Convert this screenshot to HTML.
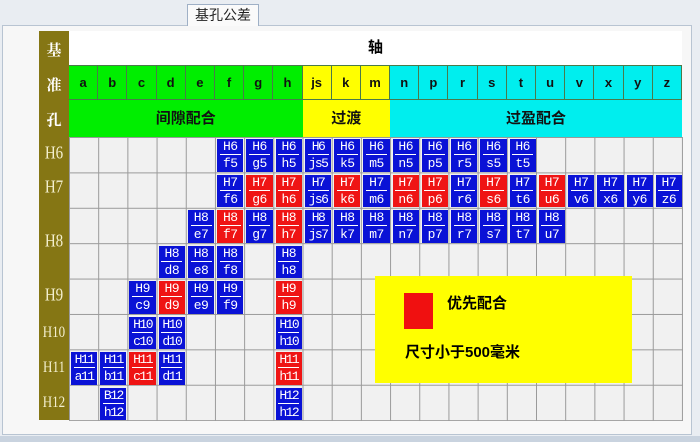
<!DOCTYPE html>
<html><head><meta charset="utf-8"><style>
*{margin:0;padding:0;box-sizing:border-box}
body{width:700px;height:442px;overflow:hidden;background:#e9edf2;position:relative;font-family:"Liberation Sans","Noto Sans CJK SC",sans-serif}
.abs{position:absolute}
#panel{left:2px;top:25px;width:690px;height:410px;background:#f7f7f7;border:1px solid #b8c4d2}
#tab{left:187px;top:4px;width:72px;height:22px;background:#fafafa;border:1px solid #9fb0c6;border-bottom:none;font-size:14px;text-align:center;line-height:21px;color:#222}
#olive{left:39px;top:31px;width:30px;height:389px;background:#857614}
.ol{position:absolute;left:0;width:30px;text-align:center;color:#fff}
.cj{font-weight:bold;font-size:15px;font-family:"Liberation Serif","Noto Serif CJK SC",serif}
.hl{font-family:"Liberation Serif",serif;font-size:15px;color:#f4f0d0;transform:scaleY(1.2)}
#white{left:69px;top:31px;width:613px;height:34px;background:#fff;text-align:center;font-weight:bold;font-size:15px;line-height:34px}
.hdr{left:69px;top:65px;width:613px;height:72px;display:grid;grid-template-columns:repeat(21,1fr);grid-template-rows:35px 37px}
.lt{border:1px solid #4a7a4a;border-left-width:0;text-align:center;font-weight:bold;font-size:13px;line-height:33px;color:#111}
.cls{text-align:center;font-weight:bold;font-size:15px;line-height:37px;color:#111}
#grid{left:69px;top:137px;width:614px;height:284px;display:grid;grid-template-columns:repeat(21,1fr);grid-template-rows:repeat(8,1fr);
background-color:#f1f1f1;
background-image:linear-gradient(to right,#9a9a9a 1px,transparent 1px),linear-gradient(to bottom,#9a9a9a 1px,transparent 1px);
background-size:29.19px 100%,100% 35.4px}
.b{margin:2px 1px 1px 2px;background:#0a12d6;color:#fff;font-family:"Liberation Mono",monospace;font-size:13px;letter-spacing:-0.5px;text-align:center;line-height:15px;display:flex;flex-direction:column;align-items:center;justify-content:center;overflow:hidden}
.b.r{background:#ef1414}
.b span{display:block;border-bottom:1px solid #fff;width:21px;margin-bottom:1px}
#legend{left:375px;top:276px;width:257px;height:107px;background:#ffff00}
</style></head><body>
<div class="abs" id="panel"></div>
<div class="abs" id="tab">基孔公差</div>
<div class="abs" id="olive">
<div class="ol cj" style="top:8px">基</div>
<div class="ol cj" style="top:43px">准</div>
<div class="ol cj" style="top:78px">孔</div>
<div class="ol hl" style="top:115px">H6</div>
<div class="ol hl" style="top:149px">H7</div>
<div class="ol hl" style="top:203px">H8</div>
<div class="ol hl" style="top:257px">H9</div>
<div class="ol hl" style="top:293px;font-size:13px">H10</div>
<div class="ol hl" style="top:328px;font-size:13px">H11</div>
<div class="ol hl" style="top:363px;font-size:13px">H12</div>
</div>
<div class="abs" id="white">轴</div>
<div class="abs hdr">
<div class="lt" style="background:#00ee00">a</div><div class="lt" style="background:#00ee00">b</div><div class="lt" style="background:#00ee00">c</div><div class="lt" style="background:#00ee00">d</div><div class="lt" style="background:#00ee00">e</div><div class="lt" style="background:#00ee00">f</div><div class="lt" style="background:#00ee00">g</div><div class="lt" style="background:#00ee00">h</div>
<div class="lt" style="background:#ffff00">js</div><div class="lt" style="background:#ffff00">k</div><div class="lt" style="background:#ffff00">m</div>
<div class="lt" style="background:#00eeee">n</div><div class="lt" style="background:#00eeee">p</div><div class="lt" style="background:#00eeee">r</div><div class="lt" style="background:#00eeee">s</div><div class="lt" style="background:#00eeee">t</div><div class="lt" style="background:#00eeee">u</div><div class="lt" style="background:#00eeee">v</div><div class="lt" style="background:#00eeee">x</div><div class="lt" style="background:#00eeee">y</div><div class="lt" style="background:#00eeee">z</div>
<div class="cls" style="grid-column:1/9;background:#00ee00">间隙配合</div>
<div class="cls" style="grid-column:9/12;background:#ffff00">过渡</div>
<div class="cls" style="grid-column:12/22;background:#00eeee">过盈配合</div>
</div>
<div class="abs" id="grid">
<div class="b" style="grid-area:1/6"><span>H6</span>f5</div>
<div class="b" style="grid-area:1/7"><span>H6</span>g5</div>
<div class="b" style="grid-area:1/8"><span>H6</span>h5</div>
<div class="b" style="grid-area:1/9;letter-spacing:-1.5px"><span>H6</span>js5</div>
<div class="b" style="grid-area:1/10"><span>H6</span>k5</div>
<div class="b" style="grid-area:1/11"><span>H6</span>m5</div>
<div class="b" style="grid-area:1/12"><span>H6</span>n5</div>
<div class="b" style="grid-area:1/13"><span>H6</span>p5</div>
<div class="b" style="grid-area:1/14"><span>H6</span>r5</div>
<div class="b" style="grid-area:1/15"><span>H6</span>s5</div>
<div class="b" style="grid-area:1/16"><span>H6</span>t5</div>

<div class="b" style="grid-area:2/6"><span>H7</span>f6</div>
<div class="b r" style="grid-area:2/7"><span>H7</span>g6</div>
<div class="b r" style="grid-area:2/8"><span>H7</span>h6</div>
<div class="b" style="grid-area:2/9;letter-spacing:-1.5px"><span>H7</span>js6</div>
<div class="b r" style="grid-area:2/10"><span>H7</span>k6</div>
<div class="b" style="grid-area:2/11"><span>H7</span>m6</div>
<div class="b r" style="grid-area:2/12"><span>H7</span>n6</div>
<div class="b r" style="grid-area:2/13"><span>H7</span>p6</div>
<div class="b" style="grid-area:2/14"><span>H7</span>r6</div>
<div class="b r" style="grid-area:2/15"><span>H7</span>s6</div>
<div class="b" style="grid-area:2/16"><span>H7</span>t6</div>
<div class="b r" style="grid-area:2/17"><span>H7</span>u6</div>
<div class="b" style="grid-area:2/18"><span>H7</span>v6</div>
<div class="b" style="grid-area:2/19"><span>H7</span>x6</div>
<div class="b" style="grid-area:2/20"><span>H7</span>y6</div>
<div class="b" style="grid-area:2/21"><span>H7</span>z6</div>

<div class="b" style="grid-area:3/5"><span>H8</span>e7</div>
<div class="b r" style="grid-area:3/6"><span>H8</span>f7</div>
<div class="b" style="grid-area:3/7"><span>H8</span>g7</div>
<div class="b r" style="grid-area:3/8"><span>H8</span>h7</div>
<div class="b" style="grid-area:3/9;letter-spacing:-1.5px"><span>H8</span>js7</div>
<div class="b" style="grid-area:3/10"><span>H8</span>k7</div>
<div class="b" style="grid-area:3/11"><span>H8</span>m7</div>
<div class="b" style="grid-area:3/12"><span>H8</span>n7</div>
<div class="b" style="grid-area:3/13"><span>H8</span>p7</div>
<div class="b" style="grid-area:3/14"><span>H8</span>r7</div>
<div class="b" style="grid-area:3/15"><span>H8</span>s7</div>
<div class="b" style="grid-area:3/16"><span>H8</span>t7</div>
<div class="b" style="grid-area:3/17"><span>H8</span>u7</div>

<div class="b" style="grid-area:4/4"><span>H8</span>d8</div>
<div class="b" style="grid-area:4/5"><span>H8</span>e8</div>
<div class="b" style="grid-area:4/6"><span>H8</span>f8</div>
<div class="b" style="grid-area:4/8"><span>H8</span>h8</div>

<div class="b" style="grid-area:5/3"><span>H9</span>c9</div>
<div class="b r" style="grid-area:5/4"><span>H9</span>d9</div>
<div class="b" style="grid-area:5/5"><span>H9</span>e9</div>
<div class="b" style="grid-area:5/6"><span>H9</span>f9</div>
<div class="b r" style="grid-area:5/8"><span>H9</span>h9</div>

<div class="b" style="grid-area:6/3;letter-spacing:-1.5px"><span>H10</span>c10</div>
<div class="b" style="grid-area:6/4;letter-spacing:-1.5px"><span>H10</span>d10</div>
<div class="b" style="grid-area:6/8;letter-spacing:-1.5px"><span>H10</span>h10</div>

<div class="b" style="grid-area:7/1;letter-spacing:-1.5px"><span>H11</span>a11</div>
<div class="b" style="grid-area:7/2;letter-spacing:-1.5px"><span>H11</span>b11</div>
<div class="b r" style="grid-area:7/3;letter-spacing:-1.5px"><span>H11</span>c11</div>
<div class="b" style="grid-area:7/4;letter-spacing:-1.5px"><span>H11</span>d11</div>
<div class="b r" style="grid-area:7/8;letter-spacing:-1.5px"><span>H11</span>h11</div>

<div class="b" style="grid-area:8/2;letter-spacing:-1.5px"><span>B12</span>h12</div>
<div class="b" style="grid-area:8/8;letter-spacing:-1.5px"><span>H12</span>h12</div>
</div>
<div class="abs" id="legend">
<div class="abs" style="left:29px;top:17px;width:29px;height:36px;background:#f01010"></div>
<div class="abs" style="left:72px;top:16px;font-weight:bold;font-size:15px">优先配合</div>
<div class="abs" style="left:30px;top:65px;font-weight:bold;font-size:15px">尺寸小于500毫米</div>
</div>
<div class="abs" style="left:0;top:436px;width:700px;height:6px;background:#c9d3df"></div>
</body></html>
